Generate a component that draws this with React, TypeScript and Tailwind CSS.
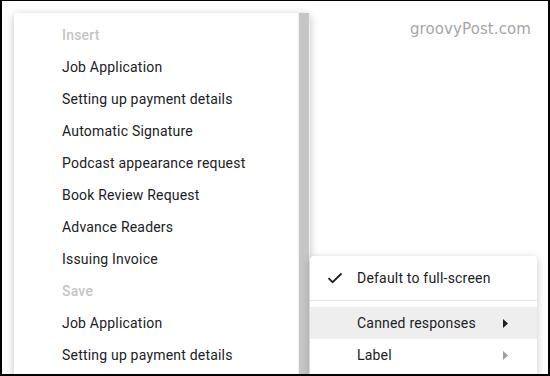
import React from "react";

const insertItems = [
  "Job Application",
  "Setting up payment details",
  "Automatic Signature",
  "Podcast appearance request",
  "Book Review Request",
  "Advance Readers",
  "Issuing Invoice",
];
const saveItems = ["Job Application", "Setting up payment details"];

function Row({ children }: { children: React.ReactNode }) {
  return (
    <div className="h-8 flex items-center pl-12 text-[14px] text-[#202124] tracking-[0.2px]">
      {children}
    </div>
  );
}

function Header({ children }: { children: React.ReactNode }) {
  return (
    <div className="h-8 flex items-center pl-12 text-[14px] font-medium text-[#c4c4c4] tracking-[0.2px]">
      {children}
    </div>
  );
}

function Tri({ color }: { color: string }) {
  return (
    <svg width="5" height="9" viewBox="0 0 5 9" className="shrink-0">
      <path d="M0 0 L5 4.5 L0 9 Z" fill={color} />
    </svg>
  );
}

export default function App() {
  return (
    <div
      className="relative w-[550px] h-[376px] overflow-hidden bg-white border-black border-t-[1px] border-l-[2px] border-r-[2px] border-b-[2px]"
      style={{ fontFamily: "Roboto, 'Noto Sans', sans-serif" }}
    >
      <div
        className="absolute left-[408px] top-[17px] text-[15px] text-[#a6a6a6] tracking-[0.1px]"
        style={{ fontFamily: "'DejaVu Sans', sans-serif" }}
      >
        groovyPost.com
      </div>

      <div className="absolute left-[12px] top-[12px] w-[296px] h-[400px] bg-white rounded-[4px] shadow-[0_2px_8px_rgba(0,0,0,0.25)] flex">
        <div className="flex-1 pt-[6px]">
          <Header>Insert</Header>
          {insertItems.map((t) => (
            <Row key={"i" + t}>{t}</Row>
          ))}
          <Header>Save</Header>
          {saveItems.map((t) => (
            <Row key={"s" + t}>{t}</Row>
          ))}
        </div>
        <div className="w-[12px] bg-[#f1f1f1] flex justify-center">
          <div className="w-[10px] bg-[#c6c6c6]" />
        </div>
      </div>

      <div className="absolute left-[308px] top-[255px] w-[227px] h-[200px] bg-white rounded-[4px] shadow-[0_2px_8px_rgba(0,0,0,0.22)] pt-[6px]">
        <div className="h-8 flex items-center text-[14px] text-[#202124] tracking-[0.2px]">
          <div className="w-[47px] flex justify-center pl-[2px]">
            <svg width="16" height="12" viewBox="0 0 16 12">
              <path d="M1.5 6.2 L5.6 10.2 L14.5 1.5" fill="none" stroke="#202124" strokeWidth="1.8" />
            </svg>
          </div>
          <span>Default to full-screen</span>
        </div>
        <div className="border-t border-[#e3e3e3] my-[6px]" />
        <div className="h-8 flex items-center bg-[#eeeeee] pl-[47px] pr-[29px] text-[14px] text-[#202124] tracking-[0.2px]">
          <span className="flex-1">Canned responses</span>
          <Tri color="#202124" />
        </div>
        <div className="h-8 flex items-center pl-[47px] pr-[29px] text-[14px] text-[#202124] tracking-[0.2px]">
          <span className="flex-1">Label</span>
          <Tri color="#9e9e9e" />
        </div>
      </div>
    </div>
  );
}
